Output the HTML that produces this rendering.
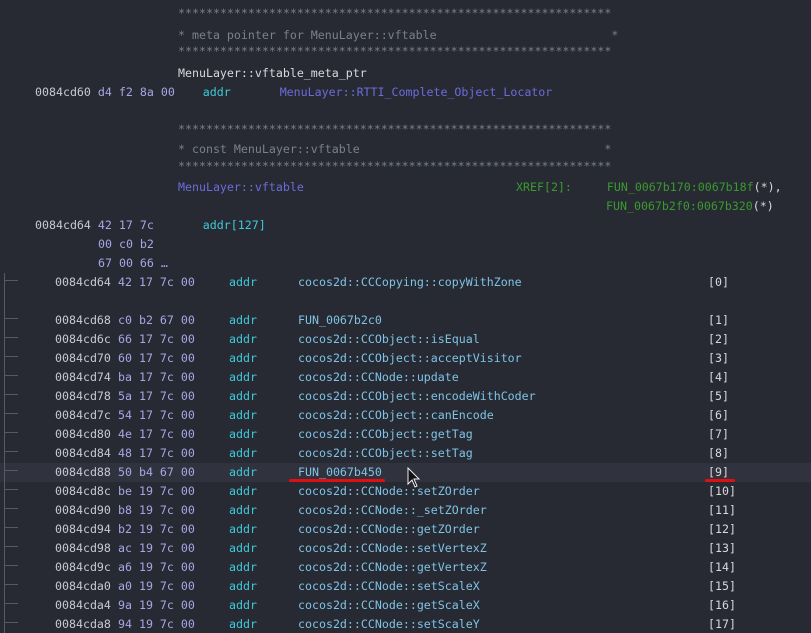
<!DOCTYPE html>
<html><head><meta charset="utf-8"><style>
body{margin:0;width:811px;height:633px;background:#272a32;overflow:hidden;position:relative;font-family:"DejaVu Sans Mono","Liberation Mono",monospace;font-size:11.62px;}
.l{position:absolute;height:16px;line-height:16px;white-space:pre;}
.c{color:#7b8089}.w{color:#d8d8e0}.a{color:#c9c9d3}.b{color:#a8a6e6}.k{color:#3fc9da}.p{color:#6d6bdc}.n{color:#7fc3e6}.g{color:#3a9a30}
.t{position:absolute;left:4px;width:1px;background:#555a63}
.h{position:absolute;left:4px;width:14px;height:1px;background:#555a63}
.hl{position:absolute;left:0;top:463px;width:811px;height:19px;background:#30333d}
.r{position:absolute;height:3px;background:#e01010;border-radius:2px}
</style></head><body>
<div class="hl"></div>
<div class="l c" style="left:178px;top:5px">**************************************************************</div>
<div class="l c" style="left:178px;top:27px">* meta pointer for MenuLayer::vftable                         *</div>
<div class="l c" style="left:178px;top:43px">**************************************************************</div>
<div class="l w" style="left:178px;top:65px">MenuLayer::vftable_meta_ptr</div>
<div class="l" style="left:35px;top:84px"><span class="a">0084cd60</span> <span class="b">d4 f2 8a 00</span>    <span class="k">addr</span>       <span class="p">MenuLayer::RTTI_Complete_Object_Locator</span></div>
<div class="l c" style="left:178px;top:121px">**************************************************************</div>
<div class="l c" style="left:178px;top:141px">* const MenuLayer::vftable                                   *</div>
<div class="l c" style="left:178px;top:158px">**************************************************************</div>
<div class="l p" style="left:178px;top:179px">MenuLayer::vftable</div>
<div class="l g" style="left:516px;top:179px">XREF[2]:     FUN_0067b170:0067b18f<span class="w">(*)</span><span class="w">,</span></div>
<div class="l g" style="left:606px;top:198px">FUN_0067b2f0:0067b320<span class="w">(*)</span></div>
<div class="l" style="left:35px;top:217px"><span class="a">0084cd64</span> <span class="b">42 17 7c</span>       <span class="k">addr[127]</span></div>
<div class="l b" style="left:98px;top:236px">00 c0 b2</div>
<div class="l b" style="left:98px;top:255px">67 00 66 …</div>
<div class="t" style="top:273px;height:360px"></div>
<div id="rows"></div>
<script>
var rows=[
[282,"0084cd64","42 17 7c 00","cocos2d::CCCopying::copyWithZone","[0]"],
[320,"0084cd68","c0 b2 67 00","FUN_0067b2c0","[1]"],
[339,"0084cd6c","66 17 7c 00","cocos2d::CCObject::isEqual","[2]"],
[358,"0084cd70","60 17 7c 00","cocos2d::CCObject::acceptVisitor","[3]"],
[377,"0084cd74","ba 17 7c 00","cocos2d::CCNode::update","[4]"],
[396,"0084cd78","5a 17 7c 00","cocos2d::CCObject::encodeWithCoder","[5]"],
[415,"0084cd7c","54 17 7c 00","cocos2d::CCObject::canEncode","[6]"],
[434,"0084cd80","4e 17 7c 00","cocos2d::CCObject::getTag","[7]"],
[453,"0084cd84","48 17 7c 00","cocos2d::CCObject::setTag","[8]"],
[472,"0084cd88","50 b4 67 00","FUN_0067b450","[9]"],
[491,"0084cd8c","be 19 7c 00","cocos2d::CCNode::setZOrder","[10]"],
[510,"0084cd90","b8 19 7c 00","cocos2d::CCNode::_setZOrder","[11]"],
[529,"0084cd94","b2 19 7c 00","cocos2d::CCNode::getZOrder","[12]"],
[548,"0084cd98","ac 19 7c 00","cocos2d::CCNode::setVertexZ","[13]"],
[567,"0084cd9c","a6 19 7c 00","cocos2d::CCNode::getVertexZ","[14]"],
[586,"0084cda0","a0 19 7c 00","cocos2d::CCNode::setScaleX","[15]"],
[605,"0084cda4","9a 19 7c 00","cocos2d::CCNode::getScaleX","[16]"],
[624,"0084cda8","94 19 7c 00","cocos2d::CCNode::setScaleY","[17]"]];
var h="";
rows.forEach(function(r){var y=r[0]-8;
h+='<div class="h" style="top:'+(r[0]-2)+'px"></div>';
h+='<div class="l a" style="left:55px;top:'+y+'px">'+r[1]+'</div>';
h+='<div class="l b" style="left:118px;top:'+y+'px">'+r[2]+'</div>';
h+='<div class="l k" style="left:229px;top:'+y+'px">addr</div>';
h+='<div class="l n" style="left:298px;top:'+y+'px">'+r[3]+'</div>';
h+='<div class="l w" style="left:708px;top:'+y+'px">'+r[4]+'</div>';});
document.getElementById("rows").innerHTML=h;
</script>
<div class="r" style="left:289px;top:479px;width:96px"></div>
<div class="r" style="left:705px;top:479px;width:30px"></div>
<svg style="position:absolute;left:407px;top:467px" width="14" height="22" viewBox="0 0 14 22"><path d="M1 1 L1 17 L5 13 L8 20 L10 19 L7 12 L12 12 Z" fill="#111" stroke="#eee" stroke-width="1"/></svg>
</body></html>
